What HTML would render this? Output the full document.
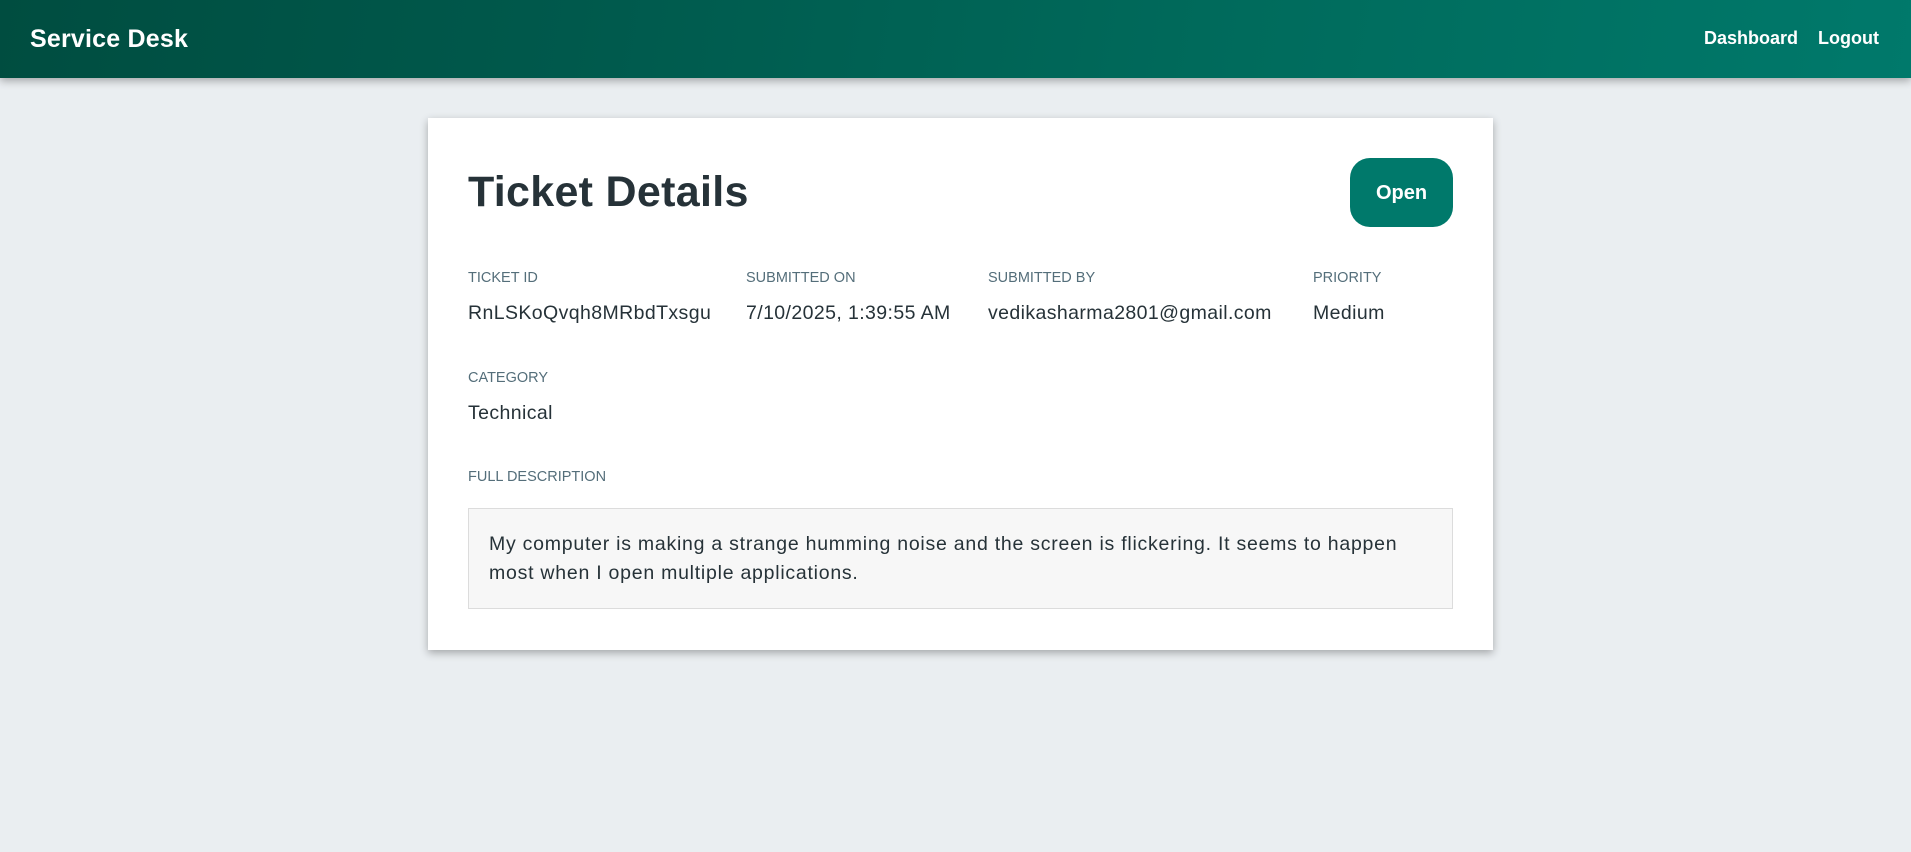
<!DOCTYPE html>
<html><head><meta charset="utf-8"><style>
*{margin:0;padding:0;box-sizing:border-box}
body{width:1911px;height:852px;background:#eaeef1;font-family:"Liberation Sans",sans-serif;color:#263238;overflow:hidden;position:relative}
.hdr{position:absolute;left:0;top:0;width:1911px;height:78px;background:linear-gradient(100deg,#004d40 0%,#00594c 30%,#006b5c 65%,#00796b 100%);box-shadow:0 3px 8px rgba(0,0,0,.3)}
.brand{position:absolute;left:30px;top:25px;color:#fff;font-size:25px;font-weight:bold;letter-spacing:0.2px}
.nav{position:absolute;right:32px;top:28px;color:#fff;font-size:18px;font-weight:bold}
.nav span{margin-left:20px}
.card{position:absolute;left:428px;top:118px;width:1065px;height:532px;background:#fff;box-shadow:0 3px 8px rgba(0,0,0,.3)}
h1{position:absolute;left:40px;top:50px;font-size:43px;font-weight:bold;color:#263238;letter-spacing:0.3px}
.btn{position:absolute;left:922px;top:40px;width:103px;height:69px;background:#00796b;border-radius:20px;color:#fff;font-size:20px;font-weight:bold;text-align:center;line-height:71px}
.l{position:absolute;font-size:14.5px;color:#546e7a;text-transform:uppercase}
.v{position:absolute;font-size:19.5px;color:#263238;letter-spacing:0.4px}
.box{position:absolute;left:40px;top:390px;width:985px;height:101px;background:#f7f7f7;border:1px solid #dcdcdc;padding:21px 20px;font-size:19.5px;line-height:29px;color:#263238;letter-spacing:0.75px;white-space:nowrap}
</style></head><body>
<div class="hdr"><div class="brand">Service Desk</div><div class="nav"><span>Dashboard</span><span>Logout</span></div></div>
<div class="card">
<h1>Ticket Details</h1>
<div class="btn">Open</div>
<div class="l" style="left:40px;top:152px">Ticket ID</div>
<div class="l" style="left:318px;top:152px">Submitted On</div>
<div class="l" style="left:560px;top:152px">Submitted By</div>
<div class="l" style="left:885px;top:152px">Priority</div>
<div class="v" style="left:40px;top:184px">RnLSKoQvqh8MRbdTxsgu</div>
<div class="v" style="left:318px;top:184px">7/10/2025, 1:39:55 AM</div>
<div class="v" style="left:560px;top:184px">vedikasharma2801@gmail.com</div>
<div class="v" style="left:885px;top:184px">Medium</div>
<div class="l" style="left:40px;top:252px">Category</div>
<div class="v" style="left:40px;top:284px">Technical</div>
<div class="l" style="left:40px;top:351px">Full Description</div>
<div class="box">My computer is making a strange humming noise and the screen is flickering. It seems to happen<br>most when I open multiple applications.</div>
</div>
</body></html>
